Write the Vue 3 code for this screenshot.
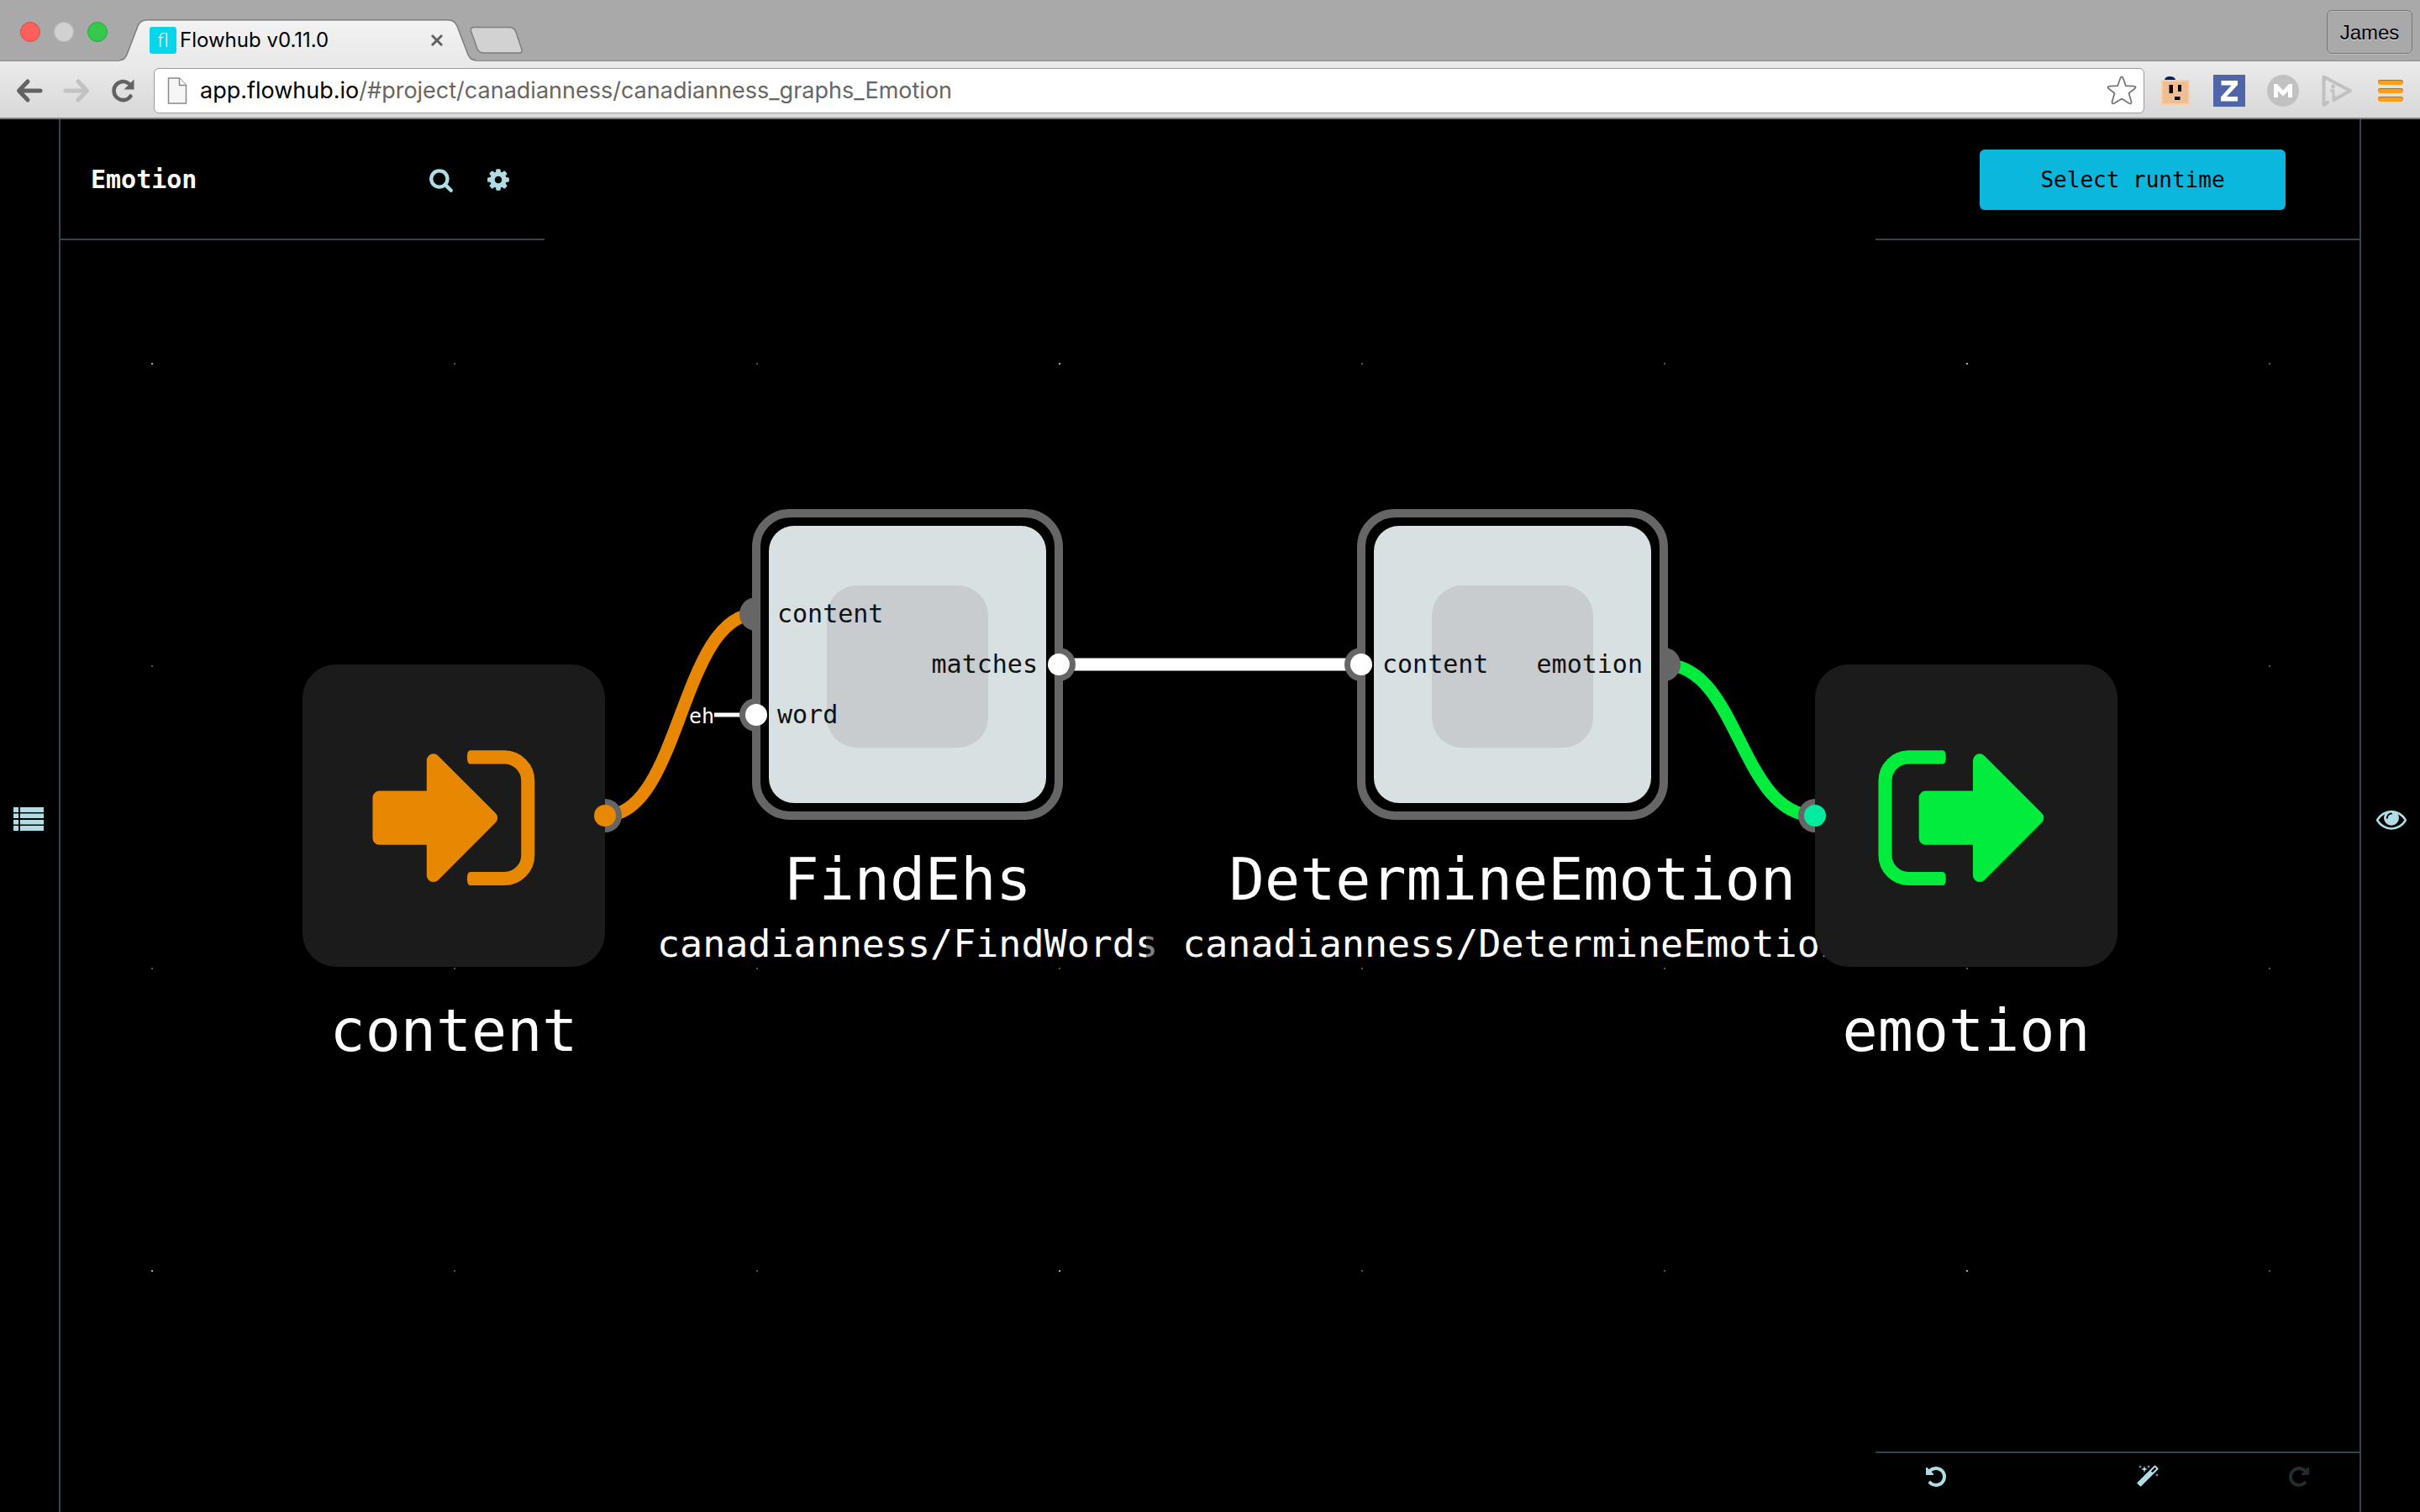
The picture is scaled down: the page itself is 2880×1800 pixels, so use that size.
<script setup>
import { ref } from 'vue'

const path = ref('/#project/canadianness/canadianness_graphs_Emotion')

const gridColumns = [181, 541, 901, 1261, 1621, 1981, 2341, 2701]
const gridRows = [291, 651, 1011, 1371]
const dots = gridRows.flatMap((y, r) =>
  gridColumns.map((x, c) => ({ x, y, major: r % 3 === 0 && c % 3 === 0 }))
)

const edges = [
  { id: 'in', color: '#e88802', d: 'M720 829C810 829 810 589 900 589' },
  { id: 'mid', color: '#ffffff', d: 'M1260 649H1620' },
  { id: 'out', color: '#02ec3e', d: 'M1980 649C2070 649 2070 829 2160 829' },
]

const nodes = [
  {
    x: 900, y: 469, name: 'FindEhs', component: 'canadianness/FindWords',
    inports: [
      { y: 120, name: 'content', linked: false },
      { y: 240, name: 'word', linked: true, value: 'eh' },
    ],
    outports: [{ y: 180, name: 'matches', linked: true }],
  },
  {
    x: 1620, y: 469, name: 'DetermineEmotion', component: 'canadianness/DetermineEmotion', shade: true,
    inports: [{ y: 180, name: 'content', linked: true }],
    outports: [{ y: 180, name: 'emotion', linked: false }],
  },
]

const arrow = 'M1312 896q0 26-19 45l-544 544q-19 19-45 19t-45-19-19-45v-288h-448q-26 0-45-19t-19-45v-384q0-26 19-45t45-19h448v-288q0-26 19-45t45-19 45 19l544 544q19 19 19 45z'
const bracket = 'M1056 256h320q119 0 203.5 84.5t84.5 203.5v704q0 119-84.5 203.5t-203.5 84.5h-320c-24 0-32-24-32-64s8-64 32-64h320q66 0 113-47t47-113v-704q0-66-47-113t-113-47h-320c-24 0-32-24-32-64s8-64 32-64z'
const rotate = 'M1664 896q0 156-61 298t-164 245-245 164-298 61q-172 0-327-72.5t-264-204.5q-7-10-6.5-22.5t8.5-20.5l137-138q10-9 25-9 16 2 23 12 73 95 179 147t225 52q104 0 198.5-40.5t163.5-109.5 109.5-163.5 40.5-198.5-40.5-198.5-109.5-163.5-163.5-109.5-198.5-40.5q-98 0-188 35.5t-160 101.5l137 138q31 30 14 69-17 40-59 40h-448q-26 0-45-19t-19-45v-448q0-42 40-59 39-17 69 14l130 129q107-101 244.5-156.5t284.5-55.5q156 0 298 61t245 164 164 245 61 298z'
</script>

<template>
  <div class="window">
    <header class="browser">
      <div class="tabstrip">
        <div class="lights">
          <button class="light close" aria-label="Close window"></button>
          <button class="light minimise" aria-label="Minimise window"></button>
          <button class="light zoom" aria-label="Zoom window"></button>
        </div>
        <div class="tab">
          <svg class="tab-shape" viewBox="0 0 424 50" aria-hidden="true">
            <defs>
              <linearGradient id="tabfill" x1="0" y1="0" x2="0" y2="1">
                <stop offset="0" stop-color="#f3f3f3" />
                <stop offset="1" stop-color="#e9e9e9" />
              </linearGradient>
            </defs>
            <path d="M0 49.500C6 49 7 46 9 42L22 8Q25 .5 33 .5H391Q399 .5 402 8L415 42C417 46 418 49 424 49.500V50H0Z" fill="url(#tabfill)" />
            <path d="M0 48.500C6 48 7 46 9 42L22 8Q25 .8 33 .8H391Q399 .8 402 8L415 42C417 46 418 48 424 48.500" fill="none" stroke="#7c7c7c" stroke-width="1.500" />
          </svg>
          <span class="favicon" aria-hidden="true">fl</span>
          <span class="tab-title">Flowhub v0.11.0</span>
          <button class="tab-close" aria-label="Close tab">
            <svg width="16" height="16" viewBox="0 0 16 16"><path d="M2 2L14 14M14 2L2 14" stroke="#626262" stroke-width="3" /></svg>
          </button>
        </div>
        <button class="new-tab" aria-label="New tab">
          <svg width="66" height="34" viewBox="0 0 66 34">
            <path d="M6 1.500H48Q54 1.500 56 7L63 28Q64 32 60 32H18Q12 32 10 27L2.500 6Q1.500 1.500 6 1.500Z" fill="#d2d2d2" stroke="#7e7e7e" stroke-width="1.500" />
          </svg>
        </button>
        <button class="profile">James</button>
      </div>

      <div class="toolbar">
        <nav class="nav" aria-label="History">
          <button aria-label="Back">
            <svg width="32" height="30" viewBox="0 0 32 30"><path d="M29 15H5M14 4L3.500 15L14 26" fill="none" stroke="#626262" stroke-width="5" stroke-linecap="round" stroke-linejoin="round" /></svg>
          </button>
          <button aria-label="Forward" disabled>
            <svg width="32" height="30" viewBox="0 0 32 30"><path d="M3 15H27M18 4L28.500 15L18 26" fill="none" stroke="#c2c2c2" stroke-width="5" stroke-linecap="round" stroke-linejoin="round" /></svg>
          </button>
          <button aria-label="Reload">
            <svg width="30" height="30" viewBox="0 0 30 30">
              <path d="M24.500 21.500A11 11 0 1 1 22 6.200" fill="none" stroke="#626262" stroke-width="4.500" stroke-linecap="round" />
              <path d="M28.500 1.500V13.500H16.500Z" fill="#626262" />
            </svg>
          </button>
        </nav>

        <label class="omnibox">
          <svg class="page-icon" width="24" height="32" viewBox="0 0 24 32" aria-hidden="true">
            <path d="M1.500 1H14.500L22.500 9.500V31H1.500Z" fill="#f6f6f6" stroke="#8b8b8b" stroke-width="1.500" />
            <path d="M14.500 1V9.500H22.500" fill="#fff" stroke="#8b8b8b" stroke-width="1.500" />
          </svg>
          <span class="host">app.flowhub.io</span>
          <input v-model="path" class="path" type="text" spellcheck="false" aria-label="Address" />
          <svg width="36" height="36" viewBox="0 0 36 36" aria-hidden="true">
            <path d="M18 1.500Q19.200 1.500 20 4L22.800 12.200L32 12.600Q36 13 33.500 15.500L26.500 21L29.300 30.500Q30 34.500 26.800 33L18 27.600L9.200 33Q6 34.500 6.700 30.500L9.500 21L2.500 15.500Q0 13 4 12.600L13.200 12.200L16 4Q16.800 1.500 18 1.500Z" fill="#fff" stroke="#777" stroke-width="1.800" stroke-linejoin="round" />
          </svg>
        </label>

        <div class="extensions">
          <button aria-label="Face extension">
            <svg width="38" height="38" viewBox="0 0 38 38">
              <path d="M6 6Q7 2 12 2Q18 2 19 6Z" fill="#0c1a5e" />
              <rect x="2" y="6" width="34" height="30" fill="#fbcfa6" />
              <rect x="4" y="8" width="30" height="26" fill="#eebf95" />
              <path d="M11.500 12H16V22H11.500ZM22 12H26V20H22ZM18 26H24.500V30H18Z" fill="#0a0705" />
            </svg>
          </button>
          <button aria-label="Z extension">
            <svg width="38" height="38" viewBox="0 0 38 38">
              <rect width="38" height="38" fill="#4f64a9" />
              <path d="M9.500 7H29V12L16 26H29V31.500H9V26.500L21.500 12.500H9.500Z" fill="#fff" />
            </svg>
          </button>
          <button aria-label="M extension">
            <svg width="38" height="38" viewBox="0 0 38 38">
              <circle cx="19" cy="19" r="19" fill="#c1c1c1" />
              <path d="M8 27V11H12L19 18.500L26 11H30V27H25V19.500L19 25.500L13 19.500V27Z" fill="#fff" />
            </svg>
          </button>
          <button aria-label="Playback extension">
            <svg width="38" height="38" viewBox="0 0 38 38">
              <path d="M8 31V33L3.500 36V2.500L35 19L14 31" fill="none" stroke="#c1c1c1" stroke-width="4" stroke-linejoin="round" />
              <circle cx="14.500" cy="14" r="2.500" fill="#c1c1c1" />
              <path d="M11 19H15V27H19" fill="none" stroke="#c1c1c1" stroke-width="3" />
            </svg>
          </button>
          <button class="menu" aria-label="Menu">
            <span class="bar"></span><span class="bar"></span><span class="bar"></span>
          </button>
        </div>
      </div>
    </header>

    <div class="app">
      <svg class="canvas" width="100%" height="100%" aria-label="Graph">
        <rect v-for="d in dots" :key="`${d.x}-${d.y}`" :x="d.x - 1" :y="d.y - 1" width="2" height="2" class="dot" :class="{ major: d.major }" />

        <path v-for="e in edges" :key="e.id" :d="e.d" :stroke="e.color" class="edge" />

        <g v-for="n in nodes" :key="n.name" :transform="`translate(${n.x} ${n.y})`">
          <rect width="360" height="360" rx="40" class="frame" />
          <rect x="15" y="15" width="330" height="330" rx="30" fill="#d8e0e2" />
          <rect x="84" y="86" width="192" height="193" rx="36" fill="#c8ccce" />
          <g v-for="p in n.inports" :key="p.name" :transform="`translate(0 ${p.y})`">
            <template v-if="p.value">
              <text x="-50" y="10" class="value">{{ p.value }}</text>
              <path d="M-50 0H-18" stroke="#fff" stroke-width="5" />
            </template>
            <path d="M0-20A20 20 0 0 0 0 20Z" fill="#666" />
            <circle v-if="p.linked" r="13" fill="#fff" />
            <text x="25" y="10" class="port">{{ p.name }}</text>
          </g>
          <g v-for="p in n.outports" :key="p.name" :transform="`translate(360 ${p.y})`">
            <path d="M0-20A20 20 0 0 1 0 20Z" fill="#666" />
            <circle v-if="p.linked" r="13" fill="#fff" />
            <text x="-25" y="10" class="port end">{{ p.name }}</text>
          </g>
          <text x="180" y="460" class="name">{{ n.name }}</text>
          <rect v-if="n.shade" x="-256" y="485" width="60" height="55" fill="#000" fill-opacity="0.5" />
          <text x="180" y="528" class="component">{{ n.component }}</text>
        </g>

        <g transform="translate(360 649)">
          <rect width="360" height="360" rx="40" fill="#1b1b1b" />
          <g transform="translate(67.400 70.200) scale(.12556)" fill="#e88802">
            <path :d="arrow" />
            <path :d="bracket" />
          </g>
          <path d="M360 160A20 20 0 0 1 360 200Z" fill="#666" />
          <circle cx="360" cy="180" r="13" fill="#e88802" />
          <text x="180" y="460" class="name">content</text>
        </g>

        <g transform="translate(2160 649)">
          <rect width="360" height="360" rx="40" fill="#1b1b1b" />
          <g transform="translate(67.400 70.200) scale(.12556)" fill="#02ec3e">
            <path :d="arrow" transform="translate(320 0)" />
            <path :d="bracket" transform="translate(1728 0) scale(-1 1)" />
          </g>
          <path d="M0 160A20 20 0 0 0 0 200Z" fill="#666" />
          <circle cy="180" r="13" fill="#02eca0" />
          <text x="180" y="460" class="name">emotion</text>
        </g>
      </svg>

      <aside class="rail left">
        <button aria-label="Component list">
          <svg width="36" height="28" viewBox="0 0 36 28" fill="#b0dde5">
            <path d="M0 0H6V6H0ZM8 0H36V6H8ZM0 7.500H6V13H0ZM8 7.500H36V13H8ZM0 15H6V20.500H0ZM8 15H36V20.500H8ZM0 22H6V28H0ZM8 22H36V28H8Z" />
          </svg>
        </button>
      </aside>

      <main class="stage">
        <div class="row">
          <section class="panel head">
            <h1>Emotion</h1>
            <button aria-label="Search">
              <svg width="30" height="30" viewBox="0 0 1792 1792" fill="#b0dde5"><path d="M1216 832q0-185-131.500-316.500t-316.500-131.500-316.500 131.500-131.500 316.500 131.500 316.500 316.500 131.500 316.500-131.500 131.500-316.500zm512 832q0 52-38 90t-90 38q-54 0-90-38l-343-342q-179 124-399 124-143 0-273.500-55.500t-225-150-150-225-55.500-273.500 55.500-273.500 150-225 225-150 273.500-55.500 273.500 55.500 225 150 150 225 55.500 273.500q0 220-124 399l343 343q37 37 37 90z" /></svg>
            </button>
            <button aria-label="Settings">
              <svg width="30" height="30" viewBox="0 0 1792 1792" fill="#b0dde5"><path d="M1152 896q0-106-75-181t-181-75-181 75-75 181 75 181 181 75 181-75 75-181zm512-109v222q0 12-8 23t-20 13l-185 28q-19 54-39 91 35 50 107 138 10 12 10 25t-9 23q-27 37-99 108t-94 71q-12 0-26-9l-138-108q-44 23-91 38-16 136-29 186-7 28-36 28h-222q-14 0-24.500-8.500t-11.500-21.500l-28-184q-49-16-90-37l-141 107q-10 9-25 9-14 0-25-11-126-114-165-168-7-10-7-23 0-12 8-23 15-21 51-66.500t54-70.500q-27-50-41-99l-183-27q-13-2-21-12.500t-8-23.500v-222q0-12 8-23t19-13l186-28q14-46 39-92-40-57-107-138-10-12-10-24 0-10 9-23 26-36 98.500-107.500t94.500-71.500q13 0 26 10l138 107q44-23 91-38 16-136 29-186 7-28 36-28h222q14 0 24.500 8.500t11.500 21.500l28 184q49 16 90 37l142-107q9-9 24-9 13 0 25 10 129 119 165 170 7 8 7 22 0 12-8 23-15 21-51 66.500t-54 70.500q26 50 41 98l183 28q13 2 21 12.500t8 23.500z" /></svg>
            </button>
          </section>
          <section class="panel runtime">
            <button class="select">Select runtime</button>
          </section>
        </div>

        <div class="row bottom">
          <section class="panel tools">
            <button aria-label="Undo">
              <svg width="28" height="28" viewBox="0 0 1792 1792" fill="#b0dde5"><path :d="rotate" /></svg>
            </button>
            <button aria-label="Auto layout">
              <svg width="28" height="28" viewBox="0 0 1792 1792" fill="#b0dde5"><path d="M1254 581l293-293-107-107-293 293zm447-293q0 27-18 45l-1286 1286q-18 18-45 18t-45-18l-198-198q-18-18-18-45t18-45l1286-1286q18-18 45-18t45 18l198 198q18 18 18 45zm-1351-190l98 30-98 30-30 98-30-98-98-30 98-30 30-98zm350 162l196 60-196 60-60 196-60-196-196-60 196-60 60-196zm930 478l98 30-98 30-30 98-30-98-98-30 98-30 30-98zm-640-640l98 30-98 30-30 98-30-98-98-30 98-30 30-98z" /></svg>
            </button>
            <button aria-label="Redo" disabled>
              <svg width="28" height="28" viewBox="0 0 1792 1792" fill="#232c2e"><path :d="rotate" transform="translate(1792 0) scale(-1 1)" /></svg>
            </button>
          </section>
        </div>
      </main>

      <aside class="rail right">
        <button aria-label="Preview">
          <svg width="36" height="36" viewBox="0 0 1792 1792" fill="#b0dde5"><path d="M1664 960q-152-236-381-353 61 104 61 225 0 185-131.500 316.500t-316.500 131.500-316.500-131.500-131.500-316.500q0-121 61-225-229 117-381 353 133 205 333.500 326.500t434.500 121.500 434.500-121.500 333.500-326.500zm-720-384q0-20-14-34t-34-14q-125 0-214.500 89.500t-89.500 214.500q0 20 14 34t34 14 34-14 14-34q0-86 61-147t147-61q20 0 34-14t14-34zm848 384q0 34-20 69-140 230-376.500 368.500t-499.500 138.500-499.500-139-376.500-368q-20-35-20-69t20-69q140-229 376.500-368t499.500-139 499.500 139 376.500 368q20 35 20 69z" /></svg>
        </button>
      </aside>
    </div>
  </div>
</template>

<style>
body {
  background: #000;
}
</style>

<style scoped>
.window {
  display: flex;
  flex-direction: column;
  min-height: 100vh;
  font-family: Inter, sans-serif;
}
button {
  margin: 0;
  padding: 0;
  border: 0;
  background: none;
  display: flex;
  align-items: center;
  justify-content: center;
  font-family: inherit;
}
svg {
  flex: none;
}

/* browser chrome */
.tabstrip {
  display: flex;
  align-items: flex-end;
  height: 72px;
  background: #a9a9a9;
  border-bottom: 1px solid #8a8a8a;
}
.lights {
  display: flex;
  align-self: center;
  gap: 16px;
  padding: 4px 14px 0 24px;
}
.light {
  width: 24px;
  height: 24px;
  border-radius: 50%;
}
.close {
  background: #fc605b;
  border: 1px solid #e24a45;
}
.minimise {
  background: #d1d1d1;
  border: 1px solid #bcbcbc;
}
.zoom {
  background: #34c94a;
  border: 1px solid #23ab39;
}
.tab {
  position: relative;
  display: flex;
  align-items: center;
  width: 424px;
  height: 50px;
  margin-bottom: -1px;
  padding: 0 38px 0 36px;
  box-sizing: border-box;
}
.tab-shape {
  position: absolute;
  inset: 0;
  width: 100%;
  height: 100%;
}
.favicon {
  position: relative;
  width: 32px;
  height: 32px;
  border-radius: 3px;
  background: #05d6ea;
  color: #fff;
  font: 300 24px/30px Lato, sans-serif;
  text-align: center;
}
.tab-title {
  position: relative;
  flex: 1;
  padding-left: 4px;
  font-size: 24px;
  line-height: 32px;
  color: #000;
  white-space: nowrap;
}
.tab-close {
  position: relative;
}
.new-tab {
  margin: 0 0 7px -8px;
}
.profile {
  width: 102px;
  height: 52px;
  margin: 0 9px 8px auto;
  padding-top: 2px;
  border: 1px solid #777;
  border-radius: 6px;
  box-shadow: inset 0 1px 0 #bdbdbd, 0 1px 0 #bdbdbd;
  background: #a9a9a9;
  color: #000;
  font: 24px/32px "Liberation Sans", sans-serif;
  text-shadow: 0 1px 0 #ddd;
}
.toolbar {
  display: flex;
  align-items: center;
  height: 69px;
  padding: 2px 16px 0 19px;
  box-sizing: border-box;
  background: linear-gradient(#ebebeb, #d8d8d8);
  border-bottom: 2px solid #7d7d7d;
}
.nav {
  display: flex;
  gap: 24px;
}
.omnibox {
  display: flex;
  align-items: center;
  flex: 1;
  height: 54px;
  margin-left: 22px;
  padding: 0 8px 0 15px;
  box-sizing: border-box;
  border: 1px solid #9a9a9a;
  border-radius: 6px;
  background: #fff;
  font-size: 27px;
  line-height: 36px;
}
.page-icon {
  margin-right: 15px;
}
.host {
  color: #000;
}
.path {
  flex: 1;
  min-width: 0;
  padding: 0;
  border: 0;
  outline: 0;
  background: none;
  font: inherit;
  color: #666;
}
.extensions {
  display: flex;
  align-items: center;
  gap: 26px;
  padding-left: 18px;
}
.menu {
  flex-direction: column;
  gap: 4px;
  width: 38px;
}
.bar {
  width: 30px;
  height: 6px;
  border-radius: 3px;
  background: #f99f1e;
  box-shadow: inset 0 1px 0 #e05a10;
}

/* application */
.app {
  position: relative;
  display: flex;
  flex: 1;
  background: #000;
  overflow: hidden;
}
.canvas {
  position: absolute;
  inset: 0;
  font-family: "DejaVu Sans Mono", monospace;
}
.rail {
  position: relative;
  display: flex;
  align-items: center;
  justify-content: center;
  width: 70px;
  padding-top: 8px;
  box-sizing: border-box;
  background: #000;
}
.left {
  padding-right: 2px;
}
.right {
  padding-left: 2px;
}
.stage {
  position: relative;
  display: flex;
  flex: 1;
  flex-direction: column;
  justify-content: space-between;
  border: solid #31454c;
  border-width: 0 2px;
}
.row {
  display: flex;
  justify-content: space-between;
}
.bottom {
  justify-content: flex-end;
}
.panel {
  display: flex;
  align-items: center;
  width: 576px;
  box-sizing: border-box;
  border: 0 solid #31454c;
  background: #000;
}
.head {
  height: 144px;
  padding: 2px 40px 0 36px;
  gap: 38px;
  border-bottom-width: 2px;
}
h1 {
  flex: 1;
  margin: 0;
  font: bold 30px/36px "DejaVu Sans Mono", monospace;
  color: #fff;
}
.runtime {
  height: 144px;
  justify-content: flex-end;
  padding: 2px 88px 0 0;
  border-bottom-width: 2px;
}
.select {
  width: 364px;
  height: 72px;
  border-radius: 6px;
  background: #0bb7dd;
  color: #000;
  font: 26px/32px "DejaVu Sans Mono", monospace;
}
.tools {
  display: grid;
  grid-template-columns: 144px 1fr 144px;
  height: 72px;
  padding-bottom: 14px;
  border-top-width: 2px;
}
.tools button:nth-child(2) {
  padding-left: 72px;
}

/* graph */
.dot {
  fill: #555;
}
.major {
  fill: #aaa;
}
.edge {
  fill: none;
  stroke-width: 15px;
}
.frame {
  fill: #000;
  stroke: #666;
  stroke-width: 10px;
}
text {
  fill: #fff;
}
.name {
  font-size: 70px;
  text-anchor: middle;
}
.component {
  font-size: 45px;
  text-anchor: middle;
}
.port {
  font-size: 30px;
  fill: #111;
}
.end {
  text-anchor: end;
}
.value {
  font-size: 25px;
  text-anchor: end;
  stroke: #000;
  stroke-width: 4px;
  paint-order: stroke;
}
</style>
